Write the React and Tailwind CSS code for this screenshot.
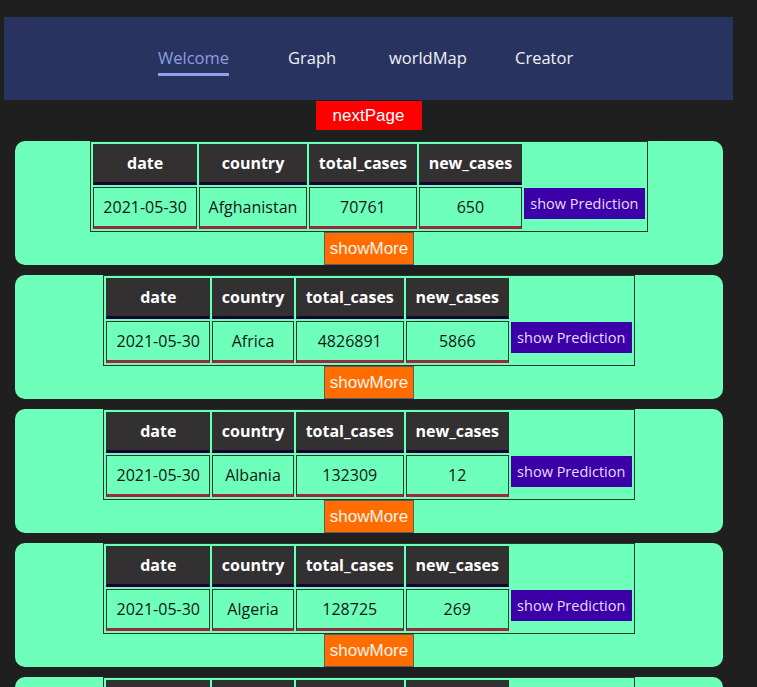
import React from "react";

// ---------------- Covid rows page ----------------
const rows = [
  { date: "2021-05-30", country: "Afghanistan", total: 70761, fresh: 650 },
  { date: "2021-05-30", country: "Africa", total: 4826891, fresh: 5866 },
  { date: "2021-05-30", country: "Albania", total: 132309, fresh: 12 },
  { date: "2021-05-30", country: "Algeria", total: 128725, fresh: 269 },
  { date: "2021-05-30", country: "Andorra", total: 13693, fresh: 0 },
];

const navLinks = [
  { label: "Welcome", w: "w-[130px]", active: true },
  { label: "Graph", w: "w-[101px]" },
  { label: "worldMap", w: "w-[126px]" },
  { label: "Creator", w: "w-[80px]" },
];

const Nav = () => (
  <nav className="mx-[4px] mt-[17px] h-[83px] bg-[#28345f] pt-[30px] pl-[154px] flex">
    {navLinks.map((l) => (
      <div key={l.label} className={`${l.w} flex`}>
        <a
          href="#"
          className={`flex flex-col text-[16.5px] leading-[22px] ${
            l.active ? "text-[#8d9de3]" : "text-[#f1f1f6]"
          }`}
        >
          {l.label}
          {l.active && <span className="mt-[4px] h-[3px] bg-[#8ea4ec]" />}
        </a>
      </div>
    ))}
  </nav>
);

const th =
  "border border-[#1d3b2b] border-b-[3px] border-b-[#1b0038] bg-[#323031] text-white font-bold pt-[6px] pb-[7px] leading-[24px] text-center";
const td =
  "border border-[#1f3d2d] border-b-[3px] border-b-[#9c2a3e] text-[#161616] py-[7px] leading-[24px] text-center";

const Card = ({ row }) => (
  <div className="mx-[15px] w-[708px] rounded-[10px] bg-[#6effba] flex flex-col items-center">
    <table className="border-separate border-spacing-[2px] border border-[#1e3a2c] text-[16px]">
      <thead>
        <tr>
          <th className={`${th} w-[104px]`}>date</th>
          <th className={`${th} px-[8.5px]`}>country</th>
          <th className={`${th} w-[108px]`}>total_cases</th>
          <th className={`${th} w-[103px]`}>new_cases</th>
          <th className="w-[121px]" />
        </tr>
      </thead>
      <tbody>
        <tr>
          <td className={td}>{row.date}</td>
          <td className={`${td} px-[8.5px]`}>{row.country}</td>
          <td className={td}>{row.total}</td>
          <td className={td}>{row.fresh}</td>
          <td className="align-top pt-[1px]">
            <button className="w-[121px] h-[31px] bg-[#3b00a7] text-[#e8dcff] text-[14.5px] leading-[31px]">
              show Prediction
            </button>
          </td>
        </tr>
      </tbody>
    </table>
    <button
      className="w-[90px] h-[33px] bg-[#ff6d00] border border-[#5c5c5c] text-[17px] text-[#fff4ea]"
      style={{ fontFamily: '"Liberation Sans", Arial, sans-serif' }}
    >
      showMore
    </button>
  </div>
);

export default function App() {
  return (
    <div
      className="min-h-screen bg-[#1f1f1f] w-full overflow-hidden pb-[10px]"
      style={{ fontFamily: '"Open Sans", "Noto Sans", sans-serif' }}
    >
      <div className="w-[737px]">
        <Nav />
        <div className="flex justify-center">
          <button
            className="mt-[1px] w-[106px] h-[29px] bg-[#ff0000] text-white text-[17px]"
            style={{ fontFamily: '"Liberation Sans", Arial, sans-serif' }}
          >
            nextPage
          </button>
        </div>
        <div className="mt-[11px] flex flex-col gap-[10px]">
          {rows.map((r) => (
            <Card key={r.country} row={r} />
          ))}
        </div>
      </div>
    </div>
  );
}
